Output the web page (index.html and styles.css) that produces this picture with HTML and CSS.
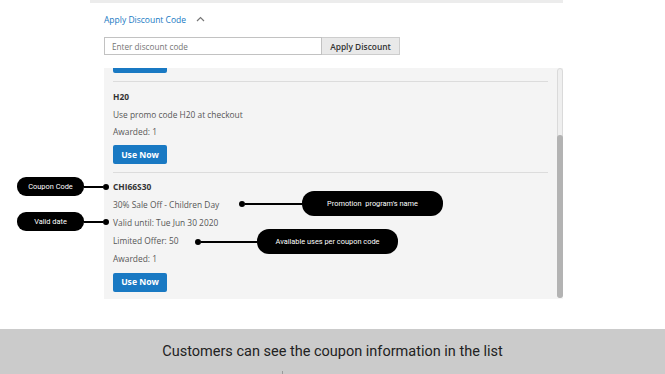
FILE: index.html
```html
<!DOCTYPE html>
<html lang="en">
<head>
    <meta charset="UTF-8">
    <meta name="viewport" content="width=device-width, initial-scale=1.0">
    <title>Coupon List</title>
    <link rel="stylesheet" href="styles.css">
</head>
<body>
    <div class="page">
        <div class="summary-edge"></div>
        <div class="discount">
            <button class="discount-toggle" type="button">
                Apply Discount Code
                <svg class="chevron" width="9" height="6" viewBox="0 0 9 6">
                    <path d="M1 5 L4.5 1.5 L8 5" fill="none" stroke="#777" stroke-width="1.2"/>
                </svg>
            </button>
            <form class="discount-form">
                <input type="text" placeholder="Enter discount code">
                <button type="button">Apply Discount</button>
            </form>
            <div class="coupon-box">
                <div class="coupon-list">
                    <div class="coupon coupon-cut">
                        <span class="btn-stub"></span>
                    </div>
                    <div class="coupon">
                        <p class="coupon-code">H20</p>
                        <p>Use promo code H20 at checkout</p>
                        <p>Awarded: 1</p>
                        <button class="use-now" type="button">Use Now</button>
                    </div>
                    <div class="coupon coupon-open">
                        <p class="coupon-code">CHI66S30</p>
                        <p>30% Sale Off - Children Day</p>
                        <p>Valid until: Tue Jun 30 2020</p>
                        <p>Limited Offer: 50</p>
                        <p>Awarded: 1</p>
                        <button class="use-now" type="button">Use Now</button>
                    </div>
                </div>
                <div class="scrollbar">
                    <div class="scroll-thumb"></div>
                </div>
            </div>
        </div>
    </div>

    <!-- callouts over the screenshot -->
    <div class="callout callout-code">
        <span class="pill">Coupon Code</span><span class="wire"></span><span class="dot"></span>
    </div>
    <div class="callout callout-date">
        <span class="pill">Valid date</span><span class="wire"></span><span class="dot"></span>
    </div>
    <div class="callout callout-name">
        <span class="dot"></span><span class="wire"></span><span class="pill pill-wide">Promotion&nbsp; program's name</span>
    </div>
    <div class="callout callout-uses">
        <span class="dot"></span><span class="wire"></span><span class="pill pill-wide">Available uses per coupon code</span>
    </div>

    <footer class="caption">
        <p>Customers can see the coupon information in the list</p>
        <span class="tick"></span>
    </footer>
</body>
</html>
```

FILE: styles.css
```css
* {
    margin: 0;
    padding: 0;
    box-sizing: border-box;
}

body {
    width: 665px;
    height: 374px;
    overflow: hidden;
    background: #fff;
    font-family: 'Open Sans', 'Liberation Sans', sans-serif;
    position: relative;
}

.page {
    height: 329px;
}

.summary-edge {
    margin-left: 90px;
    width: 473px;
    height: 3px;
    background: #ececec;
}

.discount {
    padding-left: 104px;
}

.discount-toggle {
    margin-top: 7px;
    display: flex;
    align-items: center;
    gap: 8px;
    height: 18px;
    background: none;
    border: none;
    color: #1979c3;
    font-family: inherit;
    font-size: 8.5px;
}

.chevron {
    margin-left: 2px;
}

.discount-form {
    margin-top: 9px;
    display: flex;
    height: 18px;
}

.discount-form input {
    width: 218px;
    height: 18px;
    border: 1px solid #c2c2c2;
    padding: 0 7px;
    font-family: inherit;
    font-size: 8.2px;
    color: #333;
}

.discount-form input::placeholder {
    color: #757575;
}

.discount-form button {
    width: 78px;
    height: 18px;
    border: 1px solid #cdcdcd;
    border-left: none;
    background: #e9e9e9;
    color: #333;
    font-family: inherit;
    font-size: 8.4px;
    font-weight: 600;
}

.coupon-box {
    margin-top: 13px;
    width: 459px;
    height: 231px;
    background: #f4f4f4;
    display: flex;
    overflow: hidden;
}

.coupon-list {
    flex: none;
    width: 444px;
    padding-left: 9px;
}

.coupon {
    border-bottom: 1px solid #dcdcdc;
    padding: 6px 0 8px;
}

.coupon-open {
    padding-top: 5px;
}

.coupon-cut {
    padding: 0 0 8px;
}

.btn-stub {
    display: block;
    width: 54px;
    height: 5px;
    background: #1979c3;
    border-radius: 0 0 2px 2px;
}

.coupon p {
    font-size: 8.4px;
    line-height: 17.5px;
    color: #575757;
}

.coupon-open p {
    line-height: 18px;
}

.coupon .coupon-code {
    font-weight: 700;
    color: #333;
}

.use-now {
    margin-top: 3px;
    width: 54px;
    height: 19px;
    border: none;
    border-radius: 2px;
    background: #1979c3;
    color: #fff;
    font-family: inherit;
    font-size: 8.6px;
    font-weight: 700;
}

.scrollbar {
    margin-left: 9px;
    width: 6px;
    height: 230px;
    border: 1px solid #dadada;
    border-radius: 3px;
    background: #efefef;
    padding-top: 66px;
    display: flex;
}

.scroll-thumb {
    flex: 1;
    margin: 0 -1px -1px;
    background: #b3b3b3;
    border-radius: 3px;
}

/* callouts */
.callout {
    position: absolute;
    display: flex;
    align-items: center;
}

.callout-code {
    left: 17px;
    top: 177px;
}

.callout-date {
    left: 17px;
    top: 212px;
}

.callout-name {
    left: 239px;
    top: 191px;
}

.callout-uses {
    left: 195px;
    top: 229px;
}

.pill {
    display: flex;
    align-items: center;
    justify-content: center;
    width: 67px;
    height: 19px;
    border-radius: 9px;
    background: #000;
    color: #fff;
    font-family: Roboto, 'Liberation Sans', sans-serif;
    font-size: 7.4px;
}

.pill-wide {
    width: 141px;
    height: 25px;
    border-radius: 12px;
}

.wire {
    width: 19px;
    height: 2px;
    background: #000;
}

.callout-name .wire {
    width: 57px;
}

.callout-uses .wire {
    width: 56px;
}

.dot {
    width: 6px;
    height: 6px;
    border-radius: 50%;
    background: #000;
}

.caption {
    height: 45px;
    background: #cbcbcb;
    padding-top: 14px;
    text-align: center;
    position: relative;
}

.caption p {
    font-family: Roboto, 'Liberation Sans', sans-serif;
    font-size: 14.5px;
    line-height: 18px;
    color: #222;
}

.tick {
    position: absolute;
    left: 282px;
    bottom: 0;
    width: 1px;
    height: 3px;
    background: #9a9a9a;
}
```
